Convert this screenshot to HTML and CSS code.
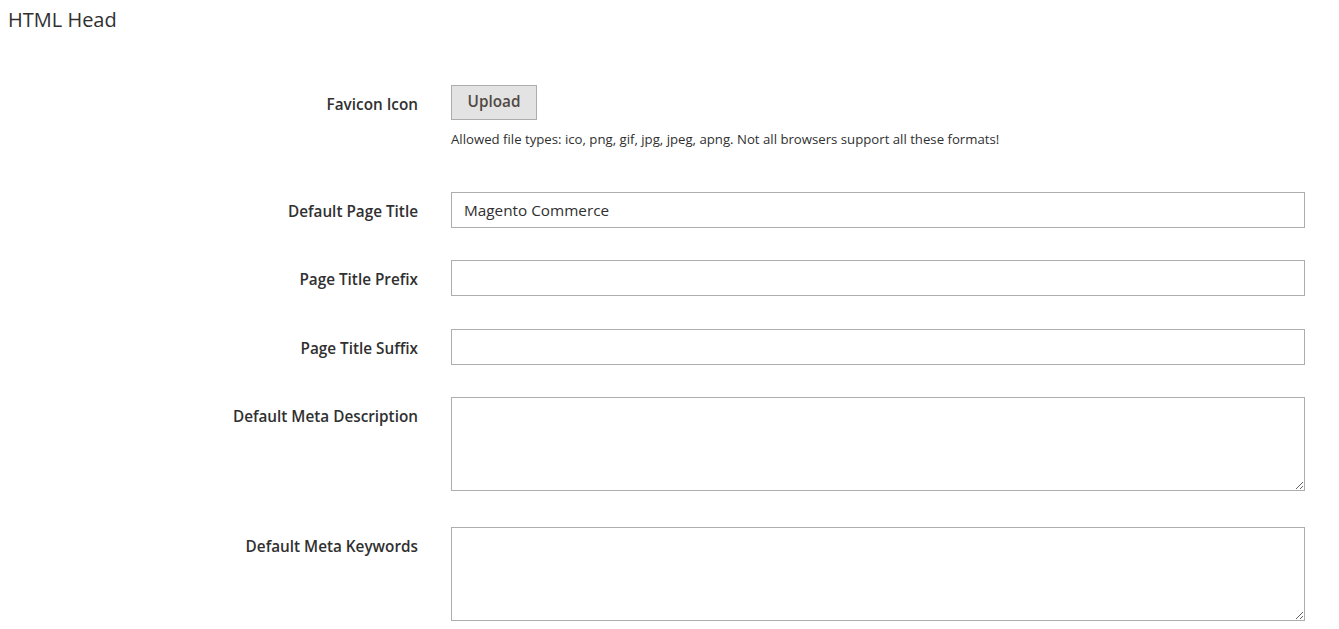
FILE: index.html
```html
<!DOCTYPE html>
<html lang="en">
<head>
<meta charset="utf-8">
<title>HTML Head</title>
<link rel="stylesheet" href="styles.css">
</head>
<body>
<div class="section">
  <h2 class="section-title">HTML Head</h2>
  <div class="form">
    <div class="row">
      <label class="label">Favicon Icon</label>
      <div class="control">
        <button class="btn" type="button">Upload</button>
        <p class="note">Allowed file types: ico, png, gif, jpg, jpeg, apng. Not all browsers support all these formats!</p>
      </div>
    </div>
    <div class="row">
      <label class="label">Default Page Title</label>
      <div class="control"><input class="input" type="text" value="Magento Commerce"></div>
    </div>
    <div class="row">
      <label class="label">Page Title Prefix</label>
      <div class="control"><input class="input" type="text"></div>
    </div>
    <div class="row">
      <label class="label">Page Title Suffix</label>
      <div class="control"><input class="input" type="text"></div>
    </div>
    <div class="row">
      <label class="label">Default Meta Description</label>
      <div class="control"><textarea class="textarea"></textarea></div>
    </div>
    <div class="row">
      <label class="label">Default Meta Keywords</label>
      <div class="control"><textarea class="textarea"></textarea></div>
    </div>
  </div>
</div>
</body>
</html>
```
FILE: styles.css
```css
html, body {
  margin: 0;
  padding: 0;
  background: #fff;
}
body {
  font-family: "Open Sans", "Liberation Sans", sans-serif;
  color: #303030;
}
.section {
  padding: 0 0 0 8px;
}
.section-title {
  margin: 0;
  padding-top: 6px;
  font-size: 20px;
  line-height: 28px;
  font-weight: 400;
  color: #303030;
}
.form {
  margin-top: 51px;
  display: flex;
  flex-direction: column;
  gap: 32.3px;
}
.row {
  display: grid;
  grid-template-columns: 410px 854px;
  column-gap: 33px;
  align-items: start;
}
.label {
  text-align: right;
  font-size: 15.3px;
  font-weight: 600;
  line-height: 20px;
  padding-top: 9px;
  color: #303030;
}
.control {
  display: flex;
  flex-direction: column;
  align-items: flex-start;
}
.btn {
  width: 86px;
  height: 35px;
  background: #e3e3e3;
  border: 1px solid #adadad;
  border-radius: 0;
  font-family: inherit;
  font-size: 15.3px;
  font-weight: 600;
  color: #514943;
  padding: 0 0 3px;
  margin: 0;
}
.note {
  margin: 10px 0 11.7px;
  font-size: 13.2px;
  line-height: 18px;
  color: #303030;
}
.input {
  box-sizing: border-box;
  width: 854px;
  height: 36px;
  margin: 0;
  border: 1px solid #adadad;
  border-radius: 0;
  padding: 0 12px;
  font-family: inherit;
  font-size: 15.3px;
  color: #303030;
  outline: none;
}
.textarea {
  box-sizing: border-box;
  width: 854px;
  height: 94px;
  margin: 0 0 4px;
  border: 1px solid #adadad;
  border-radius: 0;
  padding: 8px 12px;
  font-family: inherit;
  font-size: 15.3px;
  color: #303030;
  resize: vertical;
  display: block;
}
```
